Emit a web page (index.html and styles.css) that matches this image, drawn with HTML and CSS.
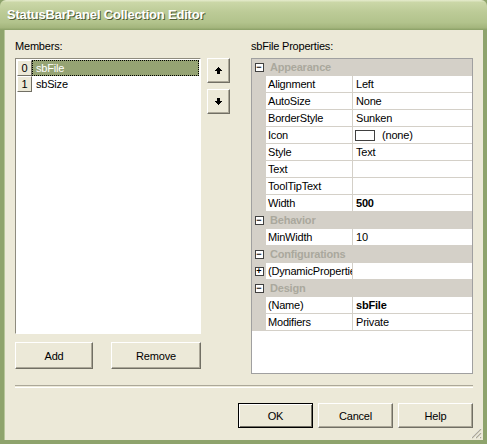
FILE: index.html
```html
<!DOCTYPE html>
<html lang="en">
<head>
    <meta charset="UTF-8">
    <title>StatusBarPanel Collection Editor</title>
    <link rel="stylesheet" href="styles.css">
</head>
<body>
    <div class="window">
        <div class="titlebar">
            <span class="title">StatusBarPanel Collection Editor</span>
        </div>
        <div class="client">
            <div class="panes">
                <div class="members">
                    <div class="label">Members:</div>
                    <div class="members-body">
                        <div class="listbox">
                            <div class="item selected"><span class="idx">0</span><span class="name">sbFile</span></div>
                            <div class="item"><span class="idx">1</span><span class="name">sbSize</span></div>
                        </div>
                        <div class="arrows">
                            <button class="btn arrow">
                                <svg width="7" height="7" viewBox="0 0 7 7"><path d="M3 0h1v1h1v1h1v1h1v1H5v3H2V4H0V3h1V2h1V1h1z" fill="#000"/></svg>
                            </button>
                            <button class="btn arrow">
                                <svg width="7" height="7" viewBox="0 0 7 7"><path d="M2 0h3v3h2v1H6v1H5v1H4v1H3V6H2V5H1V4H0V3h2z" fill="#000"/></svg>
                            </button>
                        </div>
                    </div>
                    <div class="member-buttons">
                        <button class="btn add">Add</button>
                        <button class="btn remove">Remove</button>
                    </div>
                </div>
                <div class="props">
                    <div class="label">sbFile Properties:</div>
                    <div class="grid">
                        <div class="row cat"><span class="margin"><span class="box">&minus;</span></span><span class="cat-name">Appearance</span></div>
                        <div class="row"><span class="margin"></span><span class="pname">Alignment</span><span class="pvalue">Left</span></div>
                        <div class="row"><span class="margin"></span><span class="pname">AutoSize</span><span class="pvalue">None</span></div>
                        <div class="row"><span class="margin"></span><span class="pname">BorderStyle</span><span class="pvalue">Sunken</span></div>
                        <div class="row"><span class="margin"></span><span class="pname">Icon</span><span class="pvalue"><span class="swatch"></span>(none)</span></div>
                        <div class="row"><span class="margin"></span><span class="pname">Style</span><span class="pvalue">Text</span></div>
                        <div class="row"><span class="margin"></span><span class="pname">Text</span><span class="pvalue"></span></div>
                        <div class="row"><span class="margin"></span><span class="pname">ToolTipText</span><span class="pvalue"></span></div>
                        <div class="row"><span class="margin"></span><span class="pname">Width</span><span class="pvalue bold">500</span></div>
                        <div class="row cat"><span class="margin"><span class="box">&minus;</span></span><span class="cat-name">Behavior</span></div>
                        <div class="row"><span class="margin"></span><span class="pname">MinWidth</span><span class="pvalue">10</span></div>
                        <div class="row cat"><span class="margin"><span class="box">&minus;</span></span><span class="cat-name">Configurations</span></div>
                        <div class="row"><span class="margin"><span class="box">+</span></span><span class="pname">(DynamicProperties)</span><span class="pvalue"></span></div>
                        <div class="row cat"><span class="margin"><span class="box">&minus;</span></span><span class="cat-name">Design</span></div>
                        <div class="row"><span class="margin"></span><span class="pname">(Name)</span><span class="pvalue bold">sbFile</span></div>
                        <div class="row"><span class="margin"></span><span class="pname">Modifiers</span><span class="pvalue">Private</span></div>
                    </div>
                </div>
            </div>
            <div class="separator"></div>
            <div class="dialog-buttons">
                <button class="btn default">OK</button>
                <button class="btn">Cancel</button>
                <button class="btn">Help</button>
            </div>
            <svg class="grip" width="12" height="12" viewBox="0 0 12 12">
                <path d="M11 1L1 11M11 5L5 11M11 9L9 11" stroke="#fff" stroke-width="1"/>
                <path d="M11 2L2 11M11 6L6 11M11 10L10 11" stroke="#ACA899" stroke-width="1.2"/>
            </svg>
        </div>
    </div>
</body>
</html>
```

FILE: styles.css
```css
body {
    margin: 0;
    padding: 0;
    font-family: "Liberation Sans", Arial, sans-serif;
    font-size: 11px;
    letter-spacing: -0.2px;
    color: #000;
}
.window {
    width: 487px;
    height: 444px;
    display: flex;
    flex-direction: column;
    background: #8ea36c;
    box-sizing: border-box;
    padding: 0 4px 4px 4px;
}
.titlebar {
    height: 30px;
    margin: 0 -4px;
    box-sizing: border-box;
    padding: 7px 0 0 7px;
    background: linear-gradient(#e6ecce 0, #cbd7a7 8%, #bccb97 40%, #b2c38c 75%, #a4b67d 92%, #8a9f66 100%);
    border-radius: 6px 6px 0 0;
}
.title {
    font-family: "Liberation Sans", Arial, sans-serif;
    font-weight: bold;
    font-size: 13px;
    letter-spacing: -0.2px;
    color: #fff;
    text-shadow: 1px 1px 0 #4e5a33;
}
.client {
    position: relative;
    flex: 1;
    background: #ece9d8;
    padding: 10px 10px 0 10px;
    border-left: 1px solid #b7c69a;
}
.panes {
    display: flex;
    gap: 21px;
}
.label {
    height: 13px;
    line-height: 13px;
    margin-bottom: 5px;
}
.members {
    width: 215px;
}
.members-body {
    display: flex;
}
.listbox {
    width: 186px;
    height: 276px;
    box-sizing: border-box;
    background: #fff;
    border: 1px solid;
    border-color: #8e8b7e #fff #fff #8e8b7e;
    padding: 1px;
}
.item {
    display: flex;
    height: 16px;
    line-height: 15px;
}
.idx {
    width: 15px;
    box-sizing: border-box;
    background: #ece9d8;
    border: 1px solid;
    border-color: #fff #716f64 #716f64 #fff;
    text-align: center;
}
.name {
    flex: 1;
    padding-left: 3px;
    border: 1px dotted transparent;
}
.selected .name {
    background: #95a373;
    color: #fff;
    border-color: #000;
}
.arrows {
    display: flex;
    flex-direction: column;
    gap: 6px;
    margin-left: 6px;
}
.btn {
    font-family: "Liberation Sans", Arial, sans-serif;
    font-size: 11px;
    letter-spacing: -0.2px;
    color: #000;
    background: #ece9d8;
    border: 1px solid;
    border-color: #fff #716f64 #716f64 #fff;
    box-shadow: inset -1px -1px 0 #aca899;
    padding: 0;
    width: 75px;
    height: 25px;
}
.arrow {
    width: 23px;
    height: 25px;
    display: flex;
    align-items: center;
    justify-content: center;
}
.member-buttons {
    display: flex;
    gap: 18px;
    margin-top: 8px;
}
.member-buttons .btn {
    height: 27px;
}
.add {
    width: 78px;
}
.remove {
    width: 90px;
}
.props {
    width: 223px;
}
.grid {
    height: 316px;
    box-sizing: border-box;
    border: 1px solid #a0a0a0;
    background: #fff;
}
.row {
    display: flex;
    height: 17px;
    box-sizing: border-box;
    border-bottom: 1px solid #d4d0c8;
    line-height: 16px;
}
.margin {
    width: 14px;
    background: #d4d0c8;
    display: flex;
    align-items: center;
    justify-content: center;
}
.box {
    width: 9px;
    height: 9px;
    box-sizing: border-box;
    border: 1px solid #404040;
    background: #fff;
    font-size: 9px;
    line-height: 6px;
    text-align: center;
    letter-spacing: 0;
    font-weight: bold;
}
.cat {
    background: #d4d0c8;
}
.cat-name {
    padding-left: 4px;
    font-weight: bold;
    color: #aaa89d;
}
.pname {
    width: 87px;
    padding-left: 2px;
    box-sizing: border-box;
    border-right: 1px solid #d4d0c8;
    white-space: nowrap;
    overflow: hidden;
}
.pvalue {
    flex: 1;
    padding-left: 3px;
    display: flex;
    align-items: center;
}
.bold {
    font-weight: bold;
}
.swatch {
    width: 20px;
    height: 11px;
    box-sizing: border-box;
    border: 1px solid #404040;
    margin: 0 7px 0 -1px;
}
.separator {
    height: 1px;
    border-top: 1px solid #aca899;
    border-bottom: 1px solid #fff;
    margin-top: 11px;
}
.dialog-buttons {
    display: flex;
    justify-content: flex-end;
    gap: 5px;
    margin-top: 15px;
}
.default {
    border: 1px solid #000;
    box-shadow: inset 1px 1px 0 #fff, inset -1px -1px 0 #716f64;
}
.grip {
    position: absolute;
    right: 1px;
    bottom: 1px;
}
```
